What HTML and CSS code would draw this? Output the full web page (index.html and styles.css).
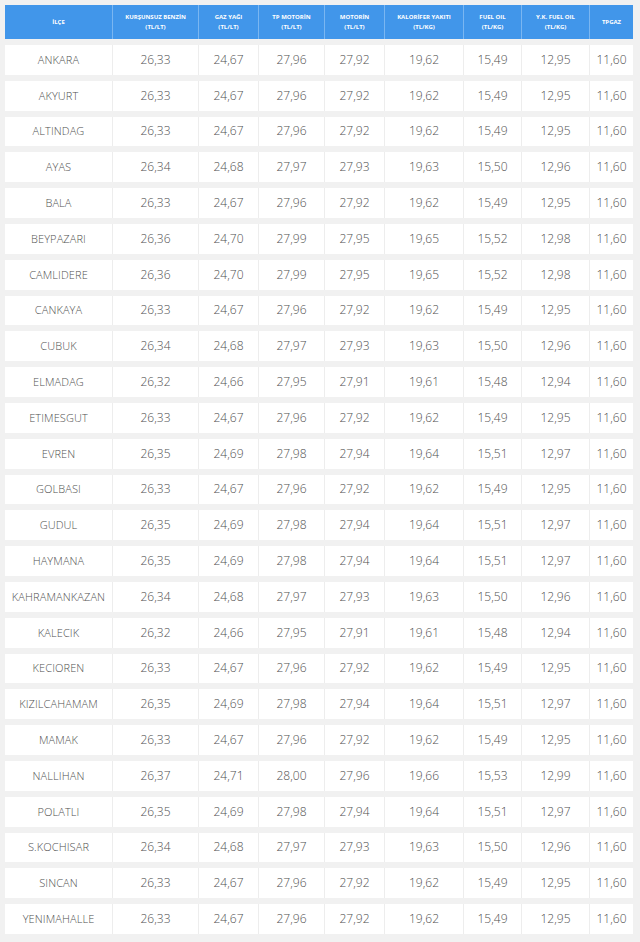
FILE: index.html
```html
<!DOCTYPE html>
<html lang="tr">
<head>
<meta charset="utf-8">
<title>Akaryakıt Fiyatları - Ankara</title>
<link rel="stylesheet" href="styles.css">
</head>
<body>
<div class="wrap">
<table class="prices">
<colgroup>
<col class="c1"><col class="c2"><col class="c3"><col class="c4"><col class="c5"><col class="c6"><col class="c7"><col class="c8"><col class="c9">
</colgroup>
<thead>
<tr>
<th>İLÇE</th>
<th>KURŞUNSUZ BENZİN<br>(TL/LT)</th>
<th>GAZ YAĞI<br>(TL/LT)</th>
<th>TP MOTORİN<br>(TL/LT)</th>
<th>MOTORİN<br>(TL/LT)</th>
<th>KALORİFER YAKITI<br>(TL/KG)</th>
<th>FUEL OIL<br>(TL/KG)</th>
<th>Y.K. FUEL OIL<br>(TL/KG)</th>
<th>TPGAZ</th>
</tr>
</thead>
<tbody>
<tr><td class="name">ANKARA</td><td>26,33</td><td>24,67</td><td>27,96</td><td>27,92</td><td>19,62</td><td>15,49</td><td>12,95</td><td>11,60</td></tr>
<tr><td class="name">AKYURT</td><td>26,33</td><td>24,67</td><td>27,96</td><td>27,92</td><td>19,62</td><td>15,49</td><td>12,95</td><td>11,60</td></tr>
<tr><td class="name">ALTINDAG</td><td>26,33</td><td>24,67</td><td>27,96</td><td>27,92</td><td>19,62</td><td>15,49</td><td>12,95</td><td>11,60</td></tr>
<tr><td class="name">AYAS</td><td>26,34</td><td>24,68</td><td>27,97</td><td>27,93</td><td>19,63</td><td>15,50</td><td>12,96</td><td>11,60</td></tr>
<tr><td class="name">BALA</td><td>26,33</td><td>24,67</td><td>27,96</td><td>27,92</td><td>19,62</td><td>15,49</td><td>12,95</td><td>11,60</td></tr>
<tr><td class="name">BEYPAZARI</td><td>26,36</td><td>24,70</td><td>27,99</td><td>27,95</td><td>19,65</td><td>15,52</td><td>12,98</td><td>11,60</td></tr>
<tr><td class="name">CAMLIDERE</td><td>26,36</td><td>24,70</td><td>27,99</td><td>27,95</td><td>19,65</td><td>15,52</td><td>12,98</td><td>11,60</td></tr>
<tr><td class="name">CANKAYA</td><td>26,33</td><td>24,67</td><td>27,96</td><td>27,92</td><td>19,62</td><td>15,49</td><td>12,95</td><td>11,60</td></tr>
<tr><td class="name">CUBUK</td><td>26,34</td><td>24,68</td><td>27,97</td><td>27,93</td><td>19,63</td><td>15,50</td><td>12,96</td><td>11,60</td></tr>
<tr><td class="name">ELMADAG</td><td>26,32</td><td>24,66</td><td>27,95</td><td>27,91</td><td>19,61</td><td>15,48</td><td>12,94</td><td>11,60</td></tr>
<tr><td class="name">ETIMESGUT</td><td>26,33</td><td>24,67</td><td>27,96</td><td>27,92</td><td>19,62</td><td>15,49</td><td>12,95</td><td>11,60</td></tr>
<tr><td class="name">EVREN</td><td>26,35</td><td>24,69</td><td>27,98</td><td>27,94</td><td>19,64</td><td>15,51</td><td>12,97</td><td>11,60</td></tr>
<tr><td class="name">GOLBASI</td><td>26,33</td><td>24,67</td><td>27,96</td><td>27,92</td><td>19,62</td><td>15,49</td><td>12,95</td><td>11,60</td></tr>
<tr><td class="name">GUDUL</td><td>26,35</td><td>24,69</td><td>27,98</td><td>27,94</td><td>19,64</td><td>15,51</td><td>12,97</td><td>11,60</td></tr>
<tr><td class="name">HAYMANA</td><td>26,35</td><td>24,69</td><td>27,98</td><td>27,94</td><td>19,64</td><td>15,51</td><td>12,97</td><td>11,60</td></tr>
<tr><td class="name">KAHRAMANKAZAN</td><td>26,34</td><td>24,68</td><td>27,97</td><td>27,93</td><td>19,63</td><td>15,50</td><td>12,96</td><td>11,60</td></tr>
<tr><td class="name">KALECIK</td><td>26,32</td><td>24,66</td><td>27,95</td><td>27,91</td><td>19,61</td><td>15,48</td><td>12,94</td><td>11,60</td></tr>
<tr><td class="name">KECIOREN</td><td>26,33</td><td>24,67</td><td>27,96</td><td>27,92</td><td>19,62</td><td>15,49</td><td>12,95</td><td>11,60</td></tr>
<tr><td class="name">KIZILCAHAMAM</td><td>26,35</td><td>24,69</td><td>27,98</td><td>27,94</td><td>19,64</td><td>15,51</td><td>12,97</td><td>11,60</td></tr>
<tr><td class="name">MAMAK</td><td>26,33</td><td>24,67</td><td>27,96</td><td>27,92</td><td>19,62</td><td>15,49</td><td>12,95</td><td>11,60</td></tr>
<tr><td class="name">NALLIHAN</td><td>26,37</td><td>24,71</td><td>28,00</td><td>27,96</td><td>19,66</td><td>15,53</td><td>12,99</td><td>11,60</td></tr>
<tr><td class="name">POLATLI</td><td>26,35</td><td>24,69</td><td>27,98</td><td>27,94</td><td>19,64</td><td>15,51</td><td>12,97</td><td>11,60</td></tr>
<tr><td class="name">S.KOCHISAR</td><td>26,34</td><td>24,68</td><td>27,97</td><td>27,93</td><td>19,63</td><td>15,50</td><td>12,96</td><td>11,60</td></tr>
<tr><td class="name">SINCAN</td><td>26,33</td><td>24,67</td><td>27,96</td><td>27,92</td><td>19,62</td><td>15,49</td><td>12,95</td><td>11,60</td></tr>
<tr><td class="name">YENIMAHALLE</td><td>26,33</td><td>24,67</td><td>27,96</td><td>27,92</td><td>19,62</td><td>15,49</td><td>12,95</td><td>11,60</td></tr>
</tbody>
</table>
</div>
</body>
</html>
```
FILE: styles.css
```css
html, body {
  margin: 0;
  padding: 0;
  background: #f1f1f1;
}
body {
  font-family: "Open Sans", "Noto Sans", "DejaVu Sans", sans-serif;
  color: #555;
}
.wrap {
  padding: 0 7px 0 5px;
}
.prices {
  width: 628px;
  table-layout: fixed;
  border-collapse: separate;
  border-spacing: 0 6px;
  margin-top: -1px;
}
.c1 { width: 108px; }
.c2 { width: 86px; }
.c3 { width: 60px; }
.c4 { width: 66px; }
.c5 { width: 60px; }
.c6 { width: 79px; }
.c7 { width: 58px; }
.c8 { width: 68px; }
.c9 { width: 43px; }

.prices th {
  background: #4196ea;
  color: #fff;
  font-size: 6px;
  font-weight: 700;
  line-height: 10px;
  height: 34px;
  padding: 0;
  text-align: center;
  vertical-align: middle;
  border-right: 1px solid #7ab6f1;
}
.prices td {
  background: #fff;
  height: 29.8px;
  padding: 0;
  text-align: center;
  vertical-align: middle;
  font-size: 12px;
  font-weight: 300;
  line-height: 14px;
  color: #505050;
  border-right: 1px solid #ededed;
}
.prices th:last-child,
.prices td:last-child {
  border-right: none;
}
.prices td.name {
  font-size: 11px;
  letter-spacing: 0.1px;
}
```
